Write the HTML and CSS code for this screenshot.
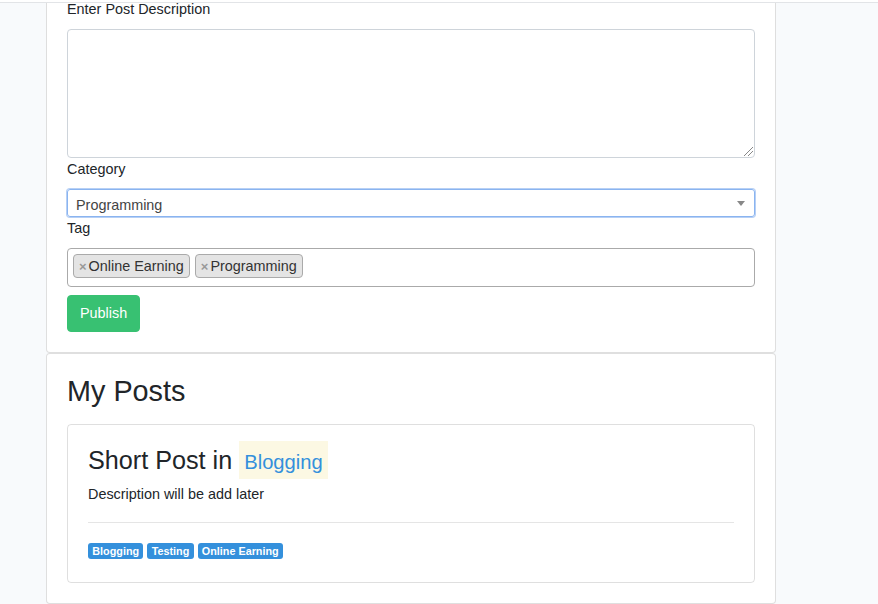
FILE: index.html
```html
<!DOCTYPE html>
<html lang="en">
<head>
<meta charset="utf-8">
<title>Posts</title>
<link rel="stylesheet" href="styles.css">
</head>
<body>
<div class="topbar"></div>
<main class="main">
  <section class="card card-form">
    <label class="lbl lbl-first">Enter Post Description</label>
    <div class="textarea"><span class="grip"></span></div>
    <label class="lbl">Category</label>
    <div class="select">
      <span class="select-text">Programming</span>
      <span class="caret"></span>
    </div>
    <label class="lbl">Tag</label>
    <div class="tags">
      <span class="chip"><span class="chip-x">×</span>Online Earning</span>
      <span class="chip"><span class="chip-x">×</span>Programming</span>
    </div>
    <button class="btn-publish">Publish</button>
  </section>
  <section class="card card-posts">
    <h2 class="posts-title">My Posts</h2>
    <div class="post">
      <h3 class="post-title">Short Post in <span class="post-cat">Blogging</span></h3>
      <p class="post-desc">Description will be add later</p>
      <hr class="post-hr">
      <div class="badges">
        <span class="badge">Blogging</span>
        <span class="badge">Testing</span>
        <span class="badge">Online Earning</span>
      </div>
    </div>
  </section>
</main>
</body>
</html>
```
FILE: styles.css
```css
* { box-sizing: border-box; }
html, body { margin: 0; padding: 0; }
body {
  background: #f8fafc;
  font-family: "Liberation Sans", Arial, sans-serif;
  font-size: 14.4px;
  color: #212529;
  height: 604px;
  overflow: hidden;
}
.topbar {
  position: fixed;
  top: 0; left: 0; right: 0;
  height: 3px;
  background: #fff;
  border-bottom: 1px solid #e2e4e7;
  z-index: 5;
}
.main {
  margin-top: -3px;
  padding-left: 46px;
  width: 776px;
}
.card {
  background: #fff;
  border: 1px solid rgba(0,0,0,.125);
  border-radius: 4px;
  padding: 0 20px 20px;
}
.card-form {
  border-top: none;
  border-radius: 0 0 4px 4px;
  display: flex;
  flex-direction: column;
  align-items: flex-start;
}
.lbl {
  display: block;
  line-height: 23px;
  margin-bottom: 8px;
}
.lbl-first { margin-top: 1px; }
.textarea {
  position: relative;
  width: 688px;
  height: 129px;
  border: 1px solid #ced4da;
  border-radius: 4px;
}
.grip {
  position: absolute;
  right: 1px; bottom: 1px;
  width: 9px; height: 9px;
  background: linear-gradient(135deg, transparent 0 45%, #888 45% 52%, transparent 52% 70%, #888 70% 77%, transparent 77%);
}
.select {
  width: 688px;
  height: 28px;
  border: 1px solid #8ab4f0;
  box-shadow: 0 0 0 1px #b7d0f5;
  border-radius: 3px;
  display: flex;
  align-items: center;
  justify-content: space-between;
  padding: 0 9px 0 8px;
  color: #444;
}
.select-text { padding-top: 3px; }
.caret {
  width: 0; height: 0;
  border-left: 4px solid transparent;
  border-right: 4px solid transparent;
  border-top: 5px solid #888;
}
.tags {
  width: 688px;
  height: 39px;
  border: 1px solid #aaa;
  border-radius: 4px;
  padding: 5px 5px;
  display: flex;
  gap: 5px;
  align-items: flex-start;
}
.chip {
  display: inline-flex;
  align-items: center;
  height: 24px;
  background: #e4e4e4;
  border: 1px solid #aaa;
  border-radius: 4px;
  padding: 0 5px 0 5px;
  color: #333;
  font-size: 14.4px;
}
.chip-x {
  color: #999;
  font-weight: bold;
  font-size: 13px;
  margin-right: 2px;
}
.btn-publish {
  margin-top: 8px;
  font-family: inherit;
  font-size: 14.4px;
  line-height: 23px;
  height: 37px;
  padding: 6px 12px;
  color: #fff;
  background: #38c172;
  border: 1px solid #38c172;
  border-radius: 4px;
}
.card-posts {
  padding-top: 20px;
}
.posts-title {
  margin: 0 0 15px;
  font-size: 28.8px;
  font-weight: 500;
  line-height: 35px;
}
.post {
  border: 1px solid rgba(0,0,0,.125);
  border-radius: 4px;
  padding: 16px 20px 23px;
}
.post-title {
  margin: 0;
  font-size: 25.2px;
  font-weight: 500;
  height: 38px;
  display: flex;
  align-items: center;
  white-space: pre;
}
.post-cat {
  display: inline-block;
  background: #fcf8e3;
  color: #3490dc;
  font-size: 20.16px;
  line-height: 38px;
  height: 38px;
  padding: 2px 5px 0;
}
.post-desc {
  margin: 4px 0 0;
  line-height: 23px;
}
.post-hr {
  margin: 16px 0 20px;
  border: 0;
  border-top: 1px solid rgba(0,0,0,.1);
}
.badges {
  display: flex;
  gap: 4px;
  height: 16px;
}
.badge {
  display: inline-block;
  height: 16px;
  line-height: 16px;
  padding: 0 4.3px;
  font-size: 10.8px;
  font-weight: bold;
  color: #fff;
  background: #3490dc;
  border-radius: 3px;
}
```
